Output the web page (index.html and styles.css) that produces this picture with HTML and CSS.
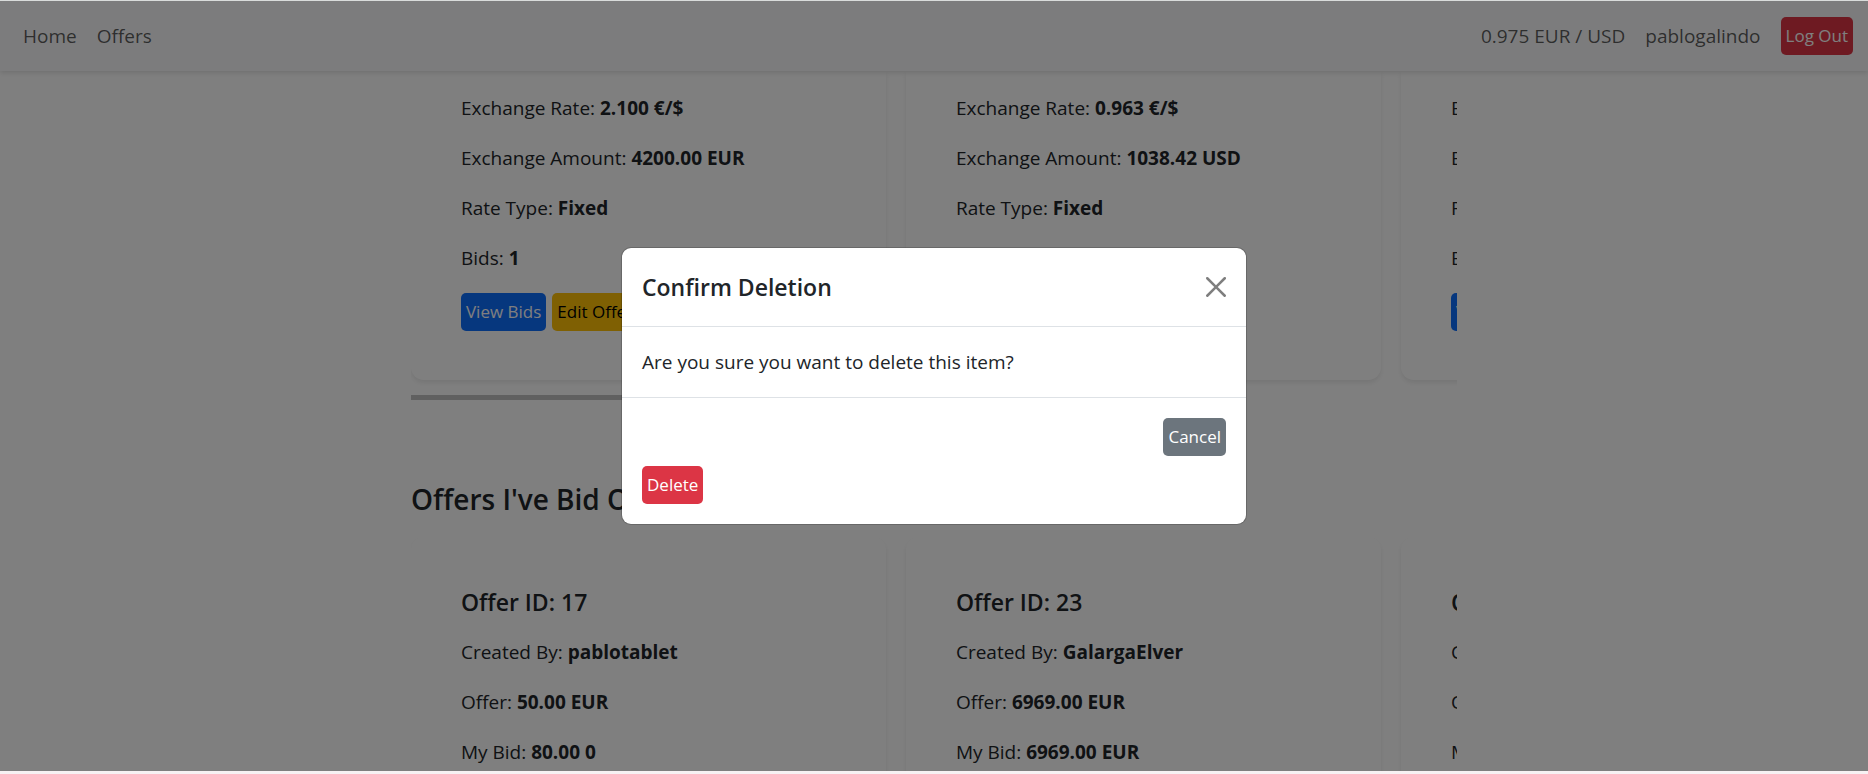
FILE: index.html
```html
<!DOCTYPE html>
<html lang="en">
<head>
<meta charset="utf-8">
<meta name="viewport" content="width=device-width, initial-scale=1">
<title>My Offers</title>
<link rel="stylesheet" href="styles.css">
</head>
<body>
<div class="frame">
  <nav class="navbar">
    <div class="nav-group">
      <a class="nav-link" href="#home">Home</a>
      <a class="nav-link" href="#offers">Offers</a>
    </div>
    <div class="nav-group">
      <span class="nav-link">0.975 EUR / USD</span>
      <a class="nav-link" href="#profile">pablogalindo</a>
      <button class="btn btn-danger" type="button">Log Out</button>
    </div>
  </nav>

  <main class="content">
    <section class="scroller">
      <div class="cards">
        <article class="card card-continued">
          <p>Exchange Rate: <strong>2.100 €/$</strong></p>
          <p>Exchange Amount: <strong>4200.00 EUR</strong></p>
          <p>Rate Type: <strong>Fixed</strong></p>
          <p>Bids: <strong>1</strong></p>
          <div class="actions">
            <button class="btn btn-primary" type="button">View Bids</button>
            <button class="btn btn-warning" type="button">Edit Offer</button>
          </div>
        </article>
        <article class="card card-continued">
          <p>Exchange Rate: <strong>0.963 €/$</strong></p>
          <p>Exchange Amount: <strong>1038.42 USD</strong></p>
          <p>Rate Type: <strong>Fixed</strong></p>
        </article>
        <article class="card card-continued">
          <p>Exchange Rate:</p>
          <p>Exchange Amount:</p>
          <p>Rate Type:</p>
          <p>Bids:</p>
          <div class="actions">
            <button class="btn btn-primary" type="button">View Bids</button>
          </div>
        </article>
      </div>
      <div class="scroll-thumb"></div>
    </section>

    <h2 class="section-title">Offers I've Bid On</h2>
    <section class="scroller">
      <div class="cards">
        <article class="card">
          <h3>Offer ID: 17</h3>
          <p>Created By: <strong>pablotablet</strong></p>
          <p>Offer: <strong>50.00 EUR</strong></p>
          <p>My Bid: <strong>80.00 0</strong></p>
        </article>
        <article class="card">
          <h3>Offer ID: 23</h3>
          <p>Created By: <strong>GalargaElver</strong></p>
          <p>Offer: <strong>6969.00 EUR</strong></p>
          <p>My Bid: <strong>6969.00 EUR</strong></p>
        </article>
        <article class="card">
          <h3>Offer ID:</h3>
          <p>Created By:</p>
          <p>Offer:</p>
          <p>My Bid:</p>
        </article>
      </div>
    </section>
  </main>

  <div class="backdrop">
    <div class="modal" role="dialog" aria-modal="true" aria-labelledby="modal-title">
      <header class="modal-header">
        <h5 class="modal-title" id="modal-title">Confirm Deletion</h5>
        <button class="close" type="button" aria-label="Close">
          <svg viewBox="0 0 16 16" width="20" height="20" aria-hidden="true"><path d="M.293.293a1 1 0 0 1 1.414 0L8 6.586 14.293.293a1 1 0 1 1 1.414 1.414L9.414 8l6.293 6.293a1 1 0 0 1-1.414 1.414L8 9.414l-6.293 6.293a1 1 0 0 1-1.414-1.414L6.586 8 .293 1.707a1 1 0 0 1 0-1.414z"/></svg>
        </button>
      </header>
      <div class="modal-body">Are you sure you want to delete this item?</div>
      <footer class="modal-footer">
        <button class="btn btn-secondary" type="button">Cancel</button>
        <form class="delete-form">
          <button class="btn btn-danger" type="button">Delete</button>
        </form>
      </footer>
    </div>
  </div>
</div>
</body>
</html>
```
FILE: styles.css
```css
* {
  box-sizing: border-box;
}

body {
  margin: 0;
  color: #212529;
  background: #fff;
  font-family: "Segoe UI", "Open Sans", "Noto Sans", sans-serif;
  font-size: 19px;
  line-height: 30px;
}

h2, h3, h5, p {
  margin: 0;
}

.frame {
  position: relative;
  height: 100vh;
  overflow: hidden;
  border-top: 1px solid #d9dcdb;
  border-bottom: 3px solid #f7f1f3;
}

.navbar {
  position: relative;
  z-index: 1;
  display: flex;
  align-items: center;
  justify-content: space-between;
  padding: 16px 15px 16px 23px;
  background: #f8f9fa;
  box-shadow: 0 2px 5px rgba(0, 0, 0, 0.12);
}

.nav-group {
  display: flex;
  align-items: center;
  gap: 20px;
}

.nav-link {
  color: rgba(0, 0, 0, 0.65);
  text-decoration: none;
}

.content {
  width: 56%;
  margin: 0 auto;
}

.scroller {
  overflow: hidden;
}

.cards {
  display: flex;
  gap: 20px;
  padding-bottom: 15px;
}

.card {
  display: flex;
  flex: 0 0 475px;
  flex-direction: column;
  gap: 20px;
  padding: 50px;
  background: #fff;
  border-radius: 13px;
  box-shadow: 0 3px 5px rgba(0, 0, 0, 0.08);
}

.card-continued {
  padding-top: 22px;
  padding-bottom: 49px;
  border-radius: 0 0 13px 13px;
}

.card h3 {
  font-size: 23px;
  font-weight: 600;
  line-height: 30px;
}

.actions {
  display: flex;
  gap: 6px;
}

.scroll-thumb {
  width: 50%;
  height: 5px;
  background: #c1c1c1;
}

.section-title {
  margin: 81px 0 20px;
  font-size: 28px;
  font-weight: 600;
  line-height: 36px;
}

.btn {
  padding: 5px;
  border: 0;
  border-radius: 5px;
  color: #fff;
  font: inherit;
  font-size: 17px;
  line-height: 28px;
}

.btn-primary { background: #0d6efd; }
.btn-warning { background: #ffc107; color: #000; }
.btn-danger { background: #dc3545; }
.btn-secondary { background: #6c757d; }

.backdrop {
  position: absolute;
  inset: 0;
  z-index: 2;
  display: flex;
  align-items: center;
  justify-content: center;
  background: rgba(0, 0, 0, 0.5);
}

.modal {
  width: 624px;
  background: #fff;
  border-radius: 9px;
  box-shadow: 0 0 0 1px rgba(0, 0, 0, 0.175);
}

.modal-header {
  display: flex;
  align-items: center;
  justify-content: space-between;
  padding: 20px;
  border-bottom: 1px solid #dee2e6;
}

.modal-title {
  font-size: 23px;
  font-weight: 600;
  line-height: 38px;
}

.close {
  display: flex;
  padding: 0;
  border: 0;
  background: none;
  opacity: 0.5;
}

.modal-body {
  padding: 20px;
}

.modal-footer {
  display: flex;
  flex-wrap: wrap;
  justify-content: flex-end;
  gap: 10px;
  padding: 20px;
  border-top: 1px solid #dee2e6;
}

.delete-form {
  display: flex;
  flex: 0 0 100%;
}
```
